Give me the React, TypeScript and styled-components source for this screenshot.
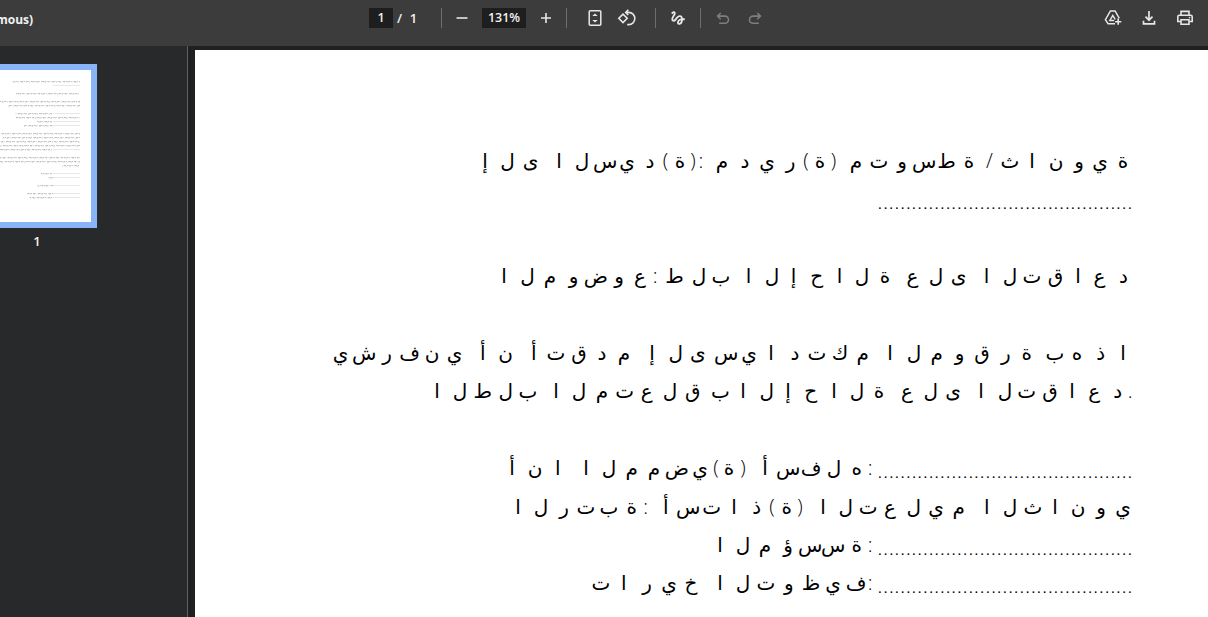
import styled, { createGlobalStyle } from "styled-components";

type LineData = {
  text: string;
  at: number[];
  dots?: boolean;
};

// "at" holds the middle of every letter, as the page draws them one by one
const lines: LineData[] = [
  {
    text: "إلىالسيد(ة):مدير(ة)متوسطة/ثانوية",
    at: [
      485, 507.5, 530.5, 559, 582, 605, 627, 650, 665.5, 680, 693, 701, 722,
      745, 767, 790.5, 806, 820, 833.5, 856, 879, 902, 924, 946.5, 969, 989.5,
      1010, 1032, 1056, 1079, 1100, 1123,
    ],
  },
  { text: "", at: [], dots: true },
  { text: "", at: [] },
  {
    text: "الموضوع:طلبالإحالةعلىالتقاعد",
    at: [
      504, 527.5, 550, 573.5, 595.7, 619, 640, 655, 674.5, 699, 721, 748.5,
      772, 793.5, 816.7, 839.5, 862, 885, 912.5, 936, 958.5, 986.5, 1010,
      1032, 1055.5, 1078, 1099.5, 1123.5,
    ],
  },
  { text: "", at: [] },
  {
    text: "يشرفنيأنأتقدمإلىسيادتكمالموقرةبهذا",
    at: [
      340.7, 364, 387, 409.5, 432, 454.5, 482.7, 505.7, 533.7, 556, 579, 602,
      624, 652, 675.7, 697.7, 726, 749, 771, 795, 817, 840, 862.7, 890, 914,
      936.7, 959.7, 982, 1005.7, 1026.7, 1055, 1077, 1100.7, 1123,
    ],
  },
  {
    text: "الطلبالمتعلقبالإحالةعلىالتقاعد.",
    at: [
      437, 460, 482.7, 505.7, 528, 556, 579, 602, 624.7, 646.7, 670, 692.7,
      720.5, 743, 766.7, 788, 810.7, 834, 857, 879, 907, 930.7, 953, 981,
      1005, 1026.7, 1050, 1072, 1094, 1117.7, 1130,
    ],
  },
  { text: "", at: [] },
  {
    text: "أناالممضي(ة)أسفله:",
    at: [
      512, 535, 557.7, 586, 609, 631.7, 654, 676.7, 700, 716, 729, 743, 765,
      788, 811, 834, 856.7, 870,
    ],
    dots: true,
  },
  {
    text: "الرتبة:أستاذ(ة)التعليمالثانوي",
    at: [
      518, 541, 564, 586, 609, 631.7, 645.7, 665.7, 688, 711.7, 734, 756.7,
      772, 786.7, 800, 823, 845.7, 868, 890, 913.7, 936, 958.7, 986.7, 1010,
      1032.7, 1055, 1078, 1101, 1123,
    ],
  },
  {
    text: "المؤسسة:",
    at: [720, 743, 765, 788, 810, 833, 856.7, 870],
    dots: true,
  },
  {
    text: "تاريخالتوظيف:",
    at: [
      601, 623.7, 647, 669, 691, 720, 743, 766, 788.7, 811, 833, 856, 870,
    ],
    dots: true,
  },
];

const PAGE_LEFT = 195;
const CELL = 24;
const DOTS_LEFT = 878;

// y, left, right of the written part, and if dots follow it
const miniLines: [number, number, number, boolean][] = [
  [11, 13, 80, false],
  [15, 80, 80, true],
  [23, 15, 80, false],
  [31, 0, 80, false],
  [35, 8, 80, false],
  [43, 15, 52, true],
  [47, 16, 80, false],
  [51, 37, 52, true],
  [55, 24, 53, true],
  [63, 0, 80, false],
  [67, 3, 80, false],
  [71, 0, 80, false],
  [75, 0, 80, false],
  [79, 0, 52, true],
  [87, 0, 80, false],
  [91, 0, 80, false],
  [95, 62, 80, false],
  [103, 41, 52, true],
  [107, 48, 53, true],
  [115, 37, 53, true],
  [123, 27, 53, true],
  [127, 29, 53, true],
];

const TextLine = ({ text, at, dots }: LineData) => {
  let end = PAGE_LEFT;
  const letters = Array.from(text).map((letter, i) => {
    const gap = at[i] - CELL / 2 - end;
    end = at[i] + CELL / 2;
    return (
      <Letter key={i} $gap={gap} $thin={"():/.".includes(letter)}>
        {letter}
      </Letter>
    );
  });
  return (
    <Line>
      {letters}
      {dots && <Dots $gap={DOTS_LEFT - end}>{".".repeat(45)}</Dots>}
    </Line>
  );
};

const Thumbnail = () => (
  <svg width="91" height="152" viewBox="0 0 91 152">
    {miniLines.map(([y, from, to, dots], i) => (
      <g key={i} fill="none">
        <path
          d={`M${from} ${y}.5H${to}`}
          stroke="#c0c0c0"
          strokeDasharray="1.4 1 2 .6 .8 1.5 2.6 .7"
          strokeDashoffset={i * 3}
        />
        <path
          d={`M${from} ${y + 1}.3H${to}`}
          stroke="#d4d4d4"
          strokeWidth=".8"
          strokeDasharray="2.2 2.6 1 1.9"
          strokeDashoffset={i * 2}
        />
        {dots && <path d={`M53 ${y}.5H80`} stroke="#e2e2e2" strokeWidth=".8" />}
      </g>
    ))}
  </svg>
);

export default function App() {
  return (
    <Viewer>
      <Global />
      <Toolbar>
        <Title>mous)</Title>
        <Field $width={24}>1</Field>
        <Total>/&nbsp; 1</Total>
        <Separator $gap={24} />
        <Tool $gap={11}>
          <svg width="18" height="18" viewBox="0 0 18 18">
            <path d="M3.5 9h11" />
          </svg>
        </Tool>
        <Field $width={44} $gap={11}>131%</Field>
        <Tool $gap={11}>
          <svg width="18" height="18" viewBox="0 0 18 18">
            <path d="M4 9h10M9 4v10" />
          </svg>
        </Tool>
        <Separator $gap={11} />
        <Tool $gap={19}>
          <svg width="18" height="18" viewBox="0 0 18 18">
            <rect x="3.2" y="1.7" width="11.6" height="14.6" rx="1" strokeWidth="1.5" />
            <path d="M6.3 7L9 4.4 11.7 7zM6.3 11L9 13.6 11.7 11z" fill="#e6e6e6" stroke="none" />
          </svg>
        </Tool>
        <Tool $gap={13}>
          <svg width="20" height="18" viewBox="0 0 20 18">
            <path d="M1.8 9.3L6 5.1l4.2 4.2L6 13.5z" />
            <path d="M8.7 3.4h3a6 6 0 0 1 0 12.2h-1.5M11.3.8L8.7 3.4l2.6 2.6" />
          </svg>
        </Tool>
        <Separator $gap={18} />
        <Tool $gap={13}>
          <svg width="18" height="18" viewBox="0 0 24 24">
            <path
              d="M4.59 6.89c.7-.71 1.4-1.35 1.71-1.22.5.2 0 1.03-.3 1.52-.25.42-2.86 3.89-2.86 6.31 0 1.28.48 2.34 1.34 2.98.75.56 1.74.73 2.64.46 1.07-.31 1.95-1.4 3.06-2.77 1.21-1.49 2.83-3.44 4.08-3.44 1.63 0 1.65 1.01 1.76 1.79-3.78.64-5.38 3.67-5.38 5.37 0 1.7 1.44 3.09 3.21 3.09 1.63 0 4.29-1.33 4.69-6.1H21v-2.5h-2.47c-.15-1.65-1.09-4.2-4.03-4.2-2.25 0-4.18 1.91-4.94 2.84-.58.73-2.06 2.48-2.29 2.72-.25.3-.68.84-1.11.84-.45 0-.72-.83-.36-1.92.35-1.09 1.4-2.86 1.85-3.52.78-1.14 1.3-1.92 1.3-3.28C8.95 3.69 7.31 3 6.44 3 5.12 3 3.97 4 3.72 4.25c-.36.36-.66.66-.88.93l1.75 1.71zm9.29 11.66c-.31 0-.74-.26-.74-.72 0-.6.73-2.2 2.87-2.76-.3 2.69-1.43 3.48-2.13 3.48z"
              fill="#e6e6e6"
              stroke="none"
            />
          </svg>
        </Tool>
        <Separator $gap={13} />
        <Tool $gap={13} $off>
          <svg width="18" height="18" viewBox="0 0 18 18">
            <path d="M6.7 4L3.6 7.1l3.1 3.1M3.8 7.1h7.1a3.6 3.6 0 0 1 0 7.2H5.2" />
          </svg>
        </Tool>
        <Tool $gap={14} $off>
          <svg width="18" height="18" viewBox="0 0 18 18">
            <path d="M11.3 4l3.1 3.1-3.1 3.1M14.2 7.1H7.1a3.6 3.6 0 0 0 0 7.2h5.7" />
          </svg>
        </Tool>
        <Actions>
          <svg width="18" height="18" viewBox="0 0 18 18">
            <path d="M11 14.8H4.1L1.4 10.7 6.4 1.9h4.7l4.2 7.4" strokeWidth="1.5" />
            <path d="M10.1 11.5H5.9l2.9-5.1 2.4 4" strokeWidth="1.5" />
            <path d="M14.2 9.6v6.2M11.1 12.7h6.2" />
          </svg>
          <svg width="18" height="18" viewBox="0 0 18 18">
            <path d="M9 2v9M5.5 7.7L9 11.2l3.5-3.5M3.5 11.8v3h11v-3" strokeWidth="1.7" />
          </svg>
          <svg width="18" height="18" viewBox="0 0 18 18">
            <path d="M5 6V2.4h8V6M4.5 12.5H1.8V7.8A1.6 1.6 0 0 1 3.4 6.2h11.2a1.6 1.6 0 0 1 1.6 1.6v4.7h-2.7" />
            <path d="M5 10.7h8v4.6H5z" />
            <circle cx="13.5" cy="8.6" r=".8" fill="#e6e6e6" stroke="none" />
          </svg>
        </Actions>
      </Toolbar>
      <Body>
        <Sidebar>
          <Thumb>
            <Thumbnail />
          </Thumb>
          <PageNumber>1</PageNumber>
        </Sidebar>
        <Paper>
          {lines.map((line, i) => (
            <TextLine key={i} {...line} />
          ))}
        </Paper>
      </Body>
    </Viewer>
  );
}

const Global = createGlobalStyle`
  body {
    margin: 0;
    overflow: hidden;
  }

  * {
    box-sizing: border-box;
  }
`;

const Viewer = styled.div`
  width: 1208px;
  height: 617px;
  display: flex;
  flex-direction: column;
  overflow: hidden;
  background: #28292a;
  color: #f1f1f1;
  font-family: "Open Sans", "Noto Sans", sans-serif;
  font-size: 13px;
`;

const Toolbar = styled.header`
  height: 46px;
  flex: none;
  padding-bottom: 10px;
  display: flex;
  align-items: center;
  background: #3c3c3c;

  svg {
    display: block;
    fill: none;
    stroke: #e6e6e6;
    stroke-width: 1.6;
  }
`;

const Title = styled.div`
  width: 369px;
  flex: none;
  padding-top: 2px;
  text-indent: -4px;
  font-size: 12px;
  font-weight: 700;
`;

const Field = styled.div<{ $width: number; $gap?: number }>`
  width: ${({ $width }) => $width}px;
  height: 20px;
  flex: none;
  margin-left: ${({ $gap }) => $gap || 0}px;
  background: #1e1e1e;
  font-size: 12.5px;
  font-weight: 600;
  line-height: 20px;
  text-align: center;
`;

const Total = styled.div`
  width: 24px;
  flex: none;
  padding-left: 4px;
  font-weight: 600;
  line-height: 20px;
  white-space: nowrap;
  word-spacing: 0.5px;
`;

const Separator = styled.div<{ $gap: number }>`
  width: 1px;
  height: 20px;
  flex: none;
  margin-left: ${({ $gap }) => $gap}px;
  background: #6e6e6e;
`;

const Tool = styled.div<{ $gap: number; $off?: boolean }>`
  flex: none;
  margin-left: ${({ $gap }) => $gap}px;
  opacity: ${({ $off }) => ($off ? 0.38 : 1)};
`;

const Actions = styled.div`
  display: flex;
  gap: 18px;
  margin-left: auto;
  padding-right: 14px;
`;

const Body = styled.div`
  flex: 1;
  min-height: 0;
  display: flex;
  background: #202020;
`;

const Sidebar = styled.aside`
  width: 188px;
  flex: none;
  padding-top: 18px;
  border-right: 1px solid #606060;
  background: #28292a;
`;

const Thumb = styled.div`
  width: 97px;
  height: 164px;
  border: solid #8ab4f8;
  border-width: 6px 6px 6px 0;
  background: #ffffff;

  svg {
    display: block;
  }
`;

const PageNumber = styled.div`
  width: 74px;
  margin-top: 4px;
  font-weight: 600;
  text-align: center;
`;

const Paper = styled.main`
  flex: 1;
  margin: 4px 0 0 7px;
  padding-top: 92px;
  background: #ffffff;
  color: #000000;
`;

const Line = styled.div`
  height: 38.4px;
  display: flex;
  align-items: baseline;
  line-height: 38.4px;
`;

const Letter = styled.span<{ $gap: number; $thin: boolean }>`
  width: ${CELL}px;
  flex: none;
  margin-left: ${({ $gap }) => $gap}px;
  font-family: ${({ $thin }) =>
    $thin ? '"Open Sans", sans-serif' : '"DejaVu Sans", sans-serif'};
  font-size: 20px;
  font-weight: ${({ $thin }) => ($thin ? 300 : 400)};
  text-align: center;
`;

const Dots = styled.span<{ $gap: number }>`
  margin-left: ${({ $gap }) => $gap}px;
  padding-top: 3px;
  align-self: flex-start;
  font-family: "Liberation Serif", serif;
  font-size: 15px;
  letter-spacing: 1.93px;
  line-height: 42px;
`;
